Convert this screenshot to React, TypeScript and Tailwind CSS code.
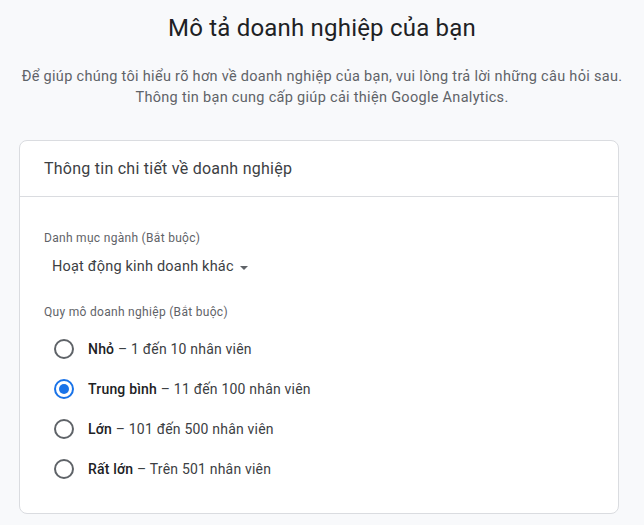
import { useState } from 'react';

const sizes = [
  { id: 'small', name: 'Nhỏ', desc: '1 đến 10 nhân viên' },
  { id: 'medium', name: 'Trung bình', desc: '11 đến 100 nhân viên' },
  { id: 'large', name: 'Lớn', desc: '101 đến 500 nhân viên' },
  { id: 'xlarge', name: 'Rất lớn', desc: 'Trên 501 nhân viên' },
];

export default function App() {
  const [size, setSize] = useState('medium');

  return (
    <div className="min-h-screen bg-[#f8f9fb] font-['Roboto',sans-serif] text-[#3c4043] pt-3 pb-3">
      <h1 className="text-center text-[24px] leading-8 tracking-[0.2px] text-[#202124]">Mô tả doanh nghiệp của bạn</h1>
      <p className="mt-[22px] text-center text-[14.5px] leading-[21px] tracking-[0.3px] text-[#5f6368]">
        Để giúp chúng tôi hiểu rõ hơn về doanh nghiệp của bạn, vui lòng trả lời những câu hỏi sau.
        <br />
        Thông tin bạn cung cấp giúp cải thiện Google Analytics.
      </p>

      {/* Business details card */}
      <div className="mx-[19px] mt-8 w-[600px] rounded-lg border border-[#dadce0] bg-white">
        <div className="flex h-14 items-center border-b border-[#dadce0] px-6 text-[16px] tracking-[0.25px] text-[#3c4043]">
          Thông tin chi tiết về doanh nghiệp
        </div>
        <div className="px-6 pt-[33px] pb-6">
          <div className="text-[12px] leading-4 tracking-[0.3px] text-[#5f6368]">Danh mục ngành (Bắt buộc)</div>
          <button className="mt-[11px] ml-2 flex items-center gap-[6px] text-[14.5px] leading-5 tracking-[0.2px] text-[#3c4043]">
            Hoạt động kinh doanh khác
            <svg width="8" height="4" viewBox="0 0 10 5" className="mt-[2px]">
              <path d="M0 0 L10 0 L5 5 Z" fill="#5f6368" />
            </svg>
          </button>

          <div className="mt-[27px] text-[12px] leading-4 tracking-[0.3px] text-[#5f6368]">Quy mô doanh nghiệp (Bắt buộc)</div>
          <div className="mt-[9px] flex flex-col">
            {sizes.map((s) => {
              const checked = size === s.id;
              return (
                <label key={s.id} className="flex h-10 cursor-pointer items-center gap-[14px] pl-[10px]">
                  <span
                    onClick={() => setSize(s.id)}
                    className={
                      checked
                        ? 'flex h-5 w-5 items-center justify-center rounded-full border-2 border-[#1a73e8]'
                        : 'flex h-5 w-5 items-center justify-center rounded-full border-2 border-[#5f6368]'
                    }
                  >
                    {checked && <span className="h-[10px] w-[10px] rounded-full bg-[#1a73e8]" />}
                  </span>
                  <span className="text-[14px] tracking-[0.2px] text-[#3c4043]">
                    <span className="font-medium text-[#202124]">{s.name}</span> – {s.desc}
                  </span>
                </label>
              );
            })}
          </div>
        </div>
      </div>
    </div>
  );
}
